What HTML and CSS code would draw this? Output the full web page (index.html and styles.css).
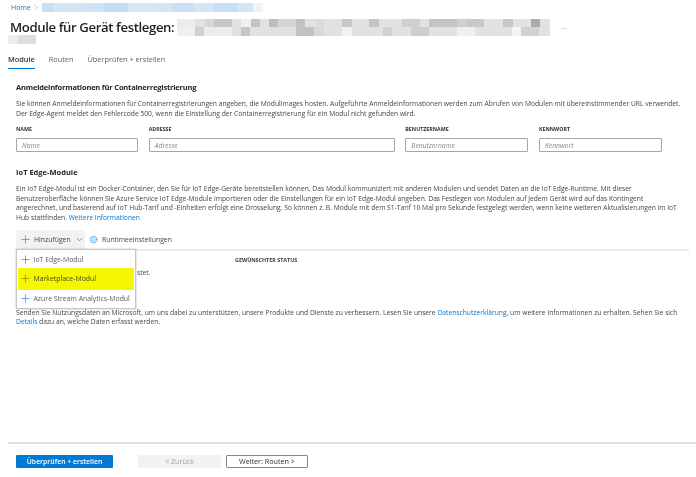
FILE: index.html
```html
<!DOCTYPE html>
<html lang="de">
<head>
<meta charset="utf-8">
<title>Module für Gerät festlegen</title>
<link rel="stylesheet" href="styles.css">
</head>
<body>
<div class="page">
  <nav class="crumbs">
    <a class="link">Home</a>
    <svg class="crumb-sep" viewBox="0 0 5 8" width="4" height="7"><path d="M1 1l3 3-3 3" fill="none" stroke="#a19f9d" stroke-width=".8"/></svg>
    <svg class="mosaic" width="221" height="9" viewBox="0 0 221 9" shape-rendering="crispEdges">
      <rect width="211" height="9" fill="#d3e6f6"/>
      <rect x="0" width="12" height="9" fill="#c8e0f3"/><rect x="40" width="22" height="9" fill="#cfe3f4"/><rect x="62" width="24" height="9" fill="#c5ddf2"/><rect x="86" width="30" height="9" fill="#d6e8f6"/><rect x="130" width="22" height="9" fill="#cbe0f3"/><rect x="172" width="24" height="9" fill="#c9dff3"/>
      <rect x="211" width="10" height="9" fill="#f3f3f3"/>
    </svg>
  </nav>
  <header class="title-row">
    <h1 class="title">Module für Gerät festlegen:</h1>
    <svg class="mosaic" width="373" height="17" viewBox="0 0 373 17" shape-rendering="crispEdges">
      <rect width="373" height="17" fill="#e2e2e2"/>
      <rect x="0" width="18" height="8" fill="#ececec"/><rect x="28" width="9" height="8" fill="#d6d6d6"/><rect x="37" width="18" height="8" fill="#c6c6c6"/><rect x="64" width="10" height="8" fill="#f0f0f0"/><rect x="74" width="9" height="8" fill="#c4c4c4"/><rect x="92" width="9" height="8" fill="#bdbdbd"/><rect x="101" width="18" height="8" fill="#d4d4d4"/><rect x="119" width="9" height="8" fill="#c2c2c2"/><rect x="138" width="9" height="8" fill="#dcdcdc"/><rect x="165" width="10" height="8" fill="#c8c8c8"/><rect x="192" width="10" height="8" fill="#c4c4c4"/><rect x="225" width="18" height="8" fill="#cfcfcf"/><rect x="252" width="28" height="8" fill="#c4c4c4"/><rect x="280" width="9" height="8" fill="#d4cfc9"/><rect x="289" width="18" height="8" fill="#c9c9c9"/><rect x="326" width="10" height="8" fill="#c8c8c8"/><rect x="354" width="9" height="8" fill="#a9acaf"/>
      <rect y="8" x="0" width="18" height="9" fill="#f0f0f0"/><rect y="8" x="18" width="9" height="9" fill="#d0d0d0"/><rect y="8" x="27" width="28" height="9" fill="#ececec"/><rect y="8" x="64" width="9" height="9" fill="#c6c6c6"/><rect y="8" x="119" width="18" height="9" fill="#c2c2c2"/><rect y="8" x="137" width="10" height="9" fill="#d8d8d8"/><rect y="8" x="165" width="10" height="9" fill="#f2f2f2"/><rect y="8" x="206" width="9" height="9" fill="#d0d0d0"/><rect y="8" x="234" width="18" height="9" fill="#cecece"/><rect y="8" x="280" width="18" height="9" fill="#f0f0f0"/><rect y="8" x="335" width="9" height="9" fill="#f4f4f4"/><rect y="8" x="344" width="18" height="9" fill="#d2d2d2"/>
    </svg>
    <span class="more">...</span>
  </header>
  <svg class="mosaic title-wrap" width="28" height="9" viewBox="0 0 28 9" shape-rendering="crispEdges"><rect width="28" height="9" fill="#ededed"/><rect x="10" width="18" height="9" fill="#dedede"/></svg>

  <div class="tabs">
    <span class="tab tab-active">Module</span>
    <span class="tab">Routen</span>
    <span class="tab">Überprüfen + erstellen</span>
  </div>

  <main class="content">
    <section class="creds">
      <h2 class="heading">Anmeldeinformationen für Containerregistrierung</h2>
      <p class="para">Sie können Anmeldeinformationen für Containerregistrierungen angeben, die Modulimages hosten. Aufgeführte Anmeldeinformationen werden zum Abrufen von Modulen mit übereinstimmender URL verwendet.<br>Der Edge-Agent meldet den Fehlercode 500, wenn die Einstellung der Containerregistrierung für ein Modul nicht gefunden wird.</p>
      <div class="fields">
        <label class="field"><span class="label">NAME</span><span class="input">Name</span></label>
        <label class="field"><span class="label">ADRESSE</span><span class="input">Adresse</span></label>
        <label class="field"><span class="label">BENUTZERNAME</span><span class="input">Benutzername</span></label>
        <label class="field"><span class="label">KENNWORT</span><span class="input">Kennwort</span></label>
      </div>
    </section>

    <section class="modules">
      <h2 class="heading">IoT Edge-Module</h2>
      <p class="para">Ein IoT Edge-Modul ist ein Docker-Container, den Sie für IoT Edge-Geräte bereitstellen können. Das Modul kommuniziert mit anderen Modulen und sendet Daten an die IoT Edge-Runtime. Mit dieser<br>Benutzeroberfläche können Sie Azure Service IoT Edge-Module importieren oder die Einstellungen für ein IoT Edge-Modul angeben. Das Festlegen von Modulen auf jedem Gerät wird auf das Kontingent<br>angerechnet, und basierend auf IoT Hub-Tarif und -Einheiten erfolgt eine Drosselung. So können z. B. Module mit dem S1-Tarif 10 Mal pro Sekunde festgelegt werden, wenn keine weiteren Aktualisierungen im IoT<br>Hub stattfinden. <a class="link">Weitere Informationen</a></p>

      <div class="toolbar-wrap">
        <div class="toolbar">
          <button class="tool tool-add">
            <svg class="plus" viewBox="0 0 10 10"><path d="M5 .5v9M.5 5h9" stroke="#3f96dc" stroke-width=".9"/></svg>
            <span>Hinzufügen</span>
            <svg class="chev" viewBox="0 0 8 5"><path d="M.7.7L4 4 7.3.7" fill="none" stroke="#605e5c" stroke-width=".7"/></svg>
          </button>
          <button class="tool">
            <svg class="gear" viewBox="0 0 10 10"><circle cx="5" cy="5" r="1.6" fill="none" stroke="#3f96dc" stroke-width=".7"/><circle cx="5" cy="5" r="3.6" fill="none" stroke="#3f96dc" stroke-width="1.3" stroke-dasharray="1.2 .7"/></svg>
            <span>Runtimeeinstellungen</span>
          </button>
        </div>
        <div class="table-head"><span class="col-status">GEWÜNSCHTER STATUS</span></div>
        <p class="para empty">stet.</p>
        <div class="menu">
          <div class="menu-item"><svg class="plus" viewBox="0 0 10 10"><path d="M5 .5v9M.5 5h9" stroke="#3f96dc" stroke-width=".9"/></svg><span>IoT Edge-Modul</span></div>
          <div class="menu-item menu-hl"><svg class="plus" viewBox="0 0 10 10"><path d="M5 .5v9M.5 5h9" stroke="#7a9a20" stroke-width=".9"/></svg><span>Marketplace-Modul</span></div>
          <div class="menu-item"><svg class="plus" viewBox="0 0 10 10"><path d="M5 .5v9M.5 5h9" stroke="#3f96dc" stroke-width=".9"/></svg><span>Azure Stream Analytics-Modul</span></div>
        </div>
      </div>
      <p class="para telemetry">Senden Sie Nutzungsdaten an Microsoft, um uns dabei zu unterstützen, unsere Produkte und Dienste zu verbessern. Lesen Sie unsere <a class="link">Datenschutzerklärung</a>, um weitere Informationen zu erhalten. Sehen Sie sich<br><a class="link">Details</a> dazu an, welche Daten erfasst werden.</p>
    </section>
  </main>

  <footer class="footer">
    <button class="btn btn-primary">Überprüfen + erstellen</button>
    <button class="btn btn-disabled">&lt; Zurück</button>
    <button class="btn btn-outline">Weiter: Routen &gt;</button>
  </footer>
</div>
</body>
</html>
```
FILE: styles.css
```css
* { box-sizing: border-box; }
html, body { margin: 0; padding: 0; background: #fff; }
body { font-family: "Open Sans", "Noto Sans", sans-serif; color: #3b3a39; overflow: hidden; }
.page { width: 696px; height: 477px; display: flex; flex-direction: column; filter: blur(.35px); }
.link { color: #0078d4; }
.mosaic { display: block; flex: none; }

.crumbs { display: flex; align-items: center; height: 9px; margin-top: 3px; padding-left: 11px; font-size: 7px; gap: 3px; }
.crumb-sep { flex: none; margin-right: 1px; }

.title-row { display: flex; align-items: center; height: 17px; margin-top: 7px; padding-left: 10px; }
.title { margin: 0 2px 0 0; font-size: 13.2px; letter-spacing: -.4px; line-height: 17px; font-weight: 600; color: #201f1e; white-space: nowrap; width: 165px; }
.more { margin-left: 11px; font-size: 7px; color: #8a8886; line-height: 7px; margin-top: -3px; }
.title-wrap { margin: -1px 0 0 8px; }

.tabs { display: flex; height: 32px; margin: 6px 0 0 8px; gap: 14px; font-size: 7.35px; color: #605e5c; }
.tab { display: flex; align-items: center; height: 19px; border-bottom: 1px solid transparent; }
.tab-active { color: #323130; font-weight: 600; border-bottom-color: #0078d4; }

.content { flex: 1; padding: 0 7px 0 16px; }
.heading { margin: 0; font-size: 7.5px; line-height: 11px; font-weight: 700; color: #252423; }
.para { margin: 0; font-size: 6.72px; line-height: 9.6px; color: #484644; white-space: nowrap; }
.creds .heading { letter-spacing: -.19px; }
.creds .para { margin-top: 6px; }

.fields { display: grid; grid-template-columns: 122px 246px 123px 123px; column-gap: 10.67px; margin-top: 7px; }
.field { display: flex; flex-direction: column; }
.label { font-size: 5.3px; line-height: 8px; font-weight: 700; color: #323130; height: 13px; }
.input { display: flex; align-items: center; height: 14px; padding-left: 5px; border: 1px solid #a8a6a4; border-radius: 1px; font-size: 6.8px; font-style: italic; color: #8a8886; }

.modules { margin-top: 15px; }
.modules > .para { margin-top: 6px; }

.toolbar-wrap { position: relative; margin-top: 7px; height: 72px; }
.toolbar { display: flex; height: 21px; border-bottom: 2px solid #ececec; }
.tool { display: flex; align-items: center; height: 19px; padding: 0; border: 0; background: none; font: inherit; font-size: 6.85px; color: #484644; }
.tool-add { width: 69px; background: #f3f2f1; padding-left: 5px; margin-right: 4px; }
.plus { width: 9px; height: 9px; flex: none; }
.tool-add .plus { margin-right: 4px; }
.chev { width: 7px; height: 5px; margin-left: 5px; }
.gear { width: 9px; height: 9px; margin-right: 4px; flex: none; }

.table-head { height: 17px; padding: 5px 0 0 219px; font-size: 5.4px; font-weight: 700; line-height: 8px; color: #3b3a39; }
.empty { padding-left: 121px; }

.menu { position: absolute; left: 0; top: 19px; width: 120px; height: 60px; padding: 1px 1px; background: #fff; border: 1px solid #c8c6c4; box-shadow: 0 0 2px rgba(0,0,0,.25); display: flex; flex-direction: column; }
.menu-item { display: flex; align-items: center; flex: 1; gap: 4px; padding-left: 2.5px; font-size: 6.9px; color: #605e5c; white-space: nowrap; }
.menu-hl { flex: none; height: 22px; background: #f6f600; color: #4a4a20; }

.telemetry { margin-top: 0; }

.footer { display: flex; height: 35px; margin-left: 8px; border-top: 2px solid #e1e1e1; padding: 11px 0 0 8px; }
.btn { height: 13px; padding: 0; border: 1px solid transparent; font: inherit; font-size: 7.2px; line-height: 11px; border-radius: 1px; }
.btn-primary { width: 97px; background: #0078d4; color: #fff; font-weight: 600; font-size: 6.9px; margin-right: 25px; }
.btn-disabled { width: 83px; background: #f3f2f1; color: #a19f9d; margin-right: 5px; }
.btn-outline { width: 82px; background: #fff; border-color: #8a8886; color: #323130; }
```
